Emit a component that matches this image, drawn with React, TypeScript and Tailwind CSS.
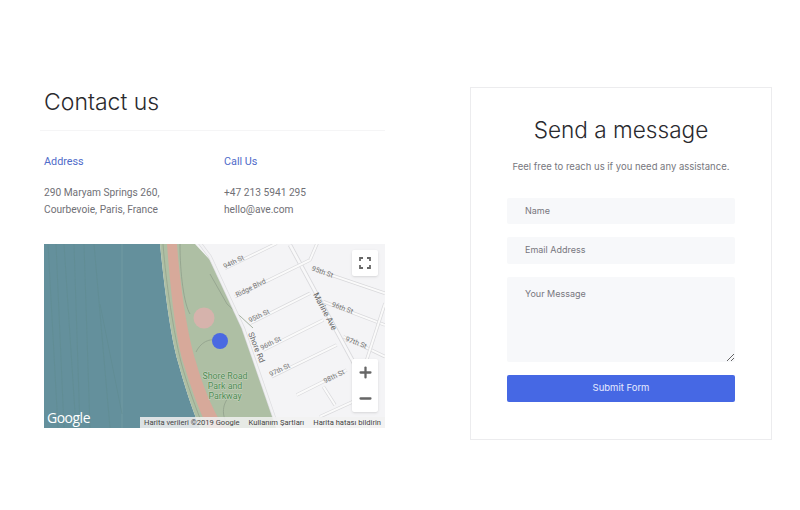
import { Minus, Plus } from 'lucide-react';

const streets = [
  'M45 85 L200 10',
  'M75 170 L300 60',
  'M120 250 L300 160',
  'M160 330 L340 240',
  'M185 410 L380 315',
  'M260 465 L410 390',
  'M305 85 L525 160',
  'M340 185 L525 255',
  'M400 290 L525 350',
  'M300 60 L330 -10',
  'M340 440 L375 495',
  'M330 530 L440 480',
  'M525 190 L470 360',
];

const labels = [
  { text: '94th St', x: 74, y: 72, r: -26 },
  { text: 'Ridge Blvd', x: 125, y: 150, r: -26 },
  { text: '95th St', x: 150, y: 234, r: -26 },
  { text: '96th St', x: 185, y: 316, r: -26 },
  { text: '97th St', x: 212, y: 396, r: -26 },
  { text: '98th St', x: 375, y: 416, r: -26 },
  { text: '95th St', x: 335, y: 102, r: 20 },
  { text: '96th St', x: 395, y: 210, r: 20 },
  { text: '97th St', x: 436, y: 314, r: 20 },
];

const MapDrawing = () => (
  <svg viewBox="0 0 341 184" className="block w-full h-full">
    <rect width="341" height="184" fill="#f4f4f6" />
    {/* water */}
    <path d="M0 0 H116 C120 40 126 90 134 118 C140 140 148 165 156 184 H0 Z" fill="#64909c" />
    <g stroke="#5f8c90" strokeWidth="0.6" fill="none">
      <path d="M4 0 L14 184" />
      <path d="M12 0 L20 184" />
      <path d="M20 0 L32 184" />
      <path d="M30 0 L36 184" />
      <path d="M40 0 L46 184" />
      <path d="M50 0 L66 184" />
      <path d="M78 0 V184" stroke="#7ba2aa" />
      <path d="M56 60 L78 170" />
    </g>
    {/* park */}
    <path d="M116 0 H151 L166 16 L199 86 L229 174 L232 184 H156 C148 165 140 140 134 118 C126 90 120 40 116 0 Z" fill="#aebfa4" />
    <path d="M123 0 H133 C136 40 143 90 152 118 C158 140 168 165 180 184 H164 C154 165 146 140 139 118 C131 90 126 40 123 0 Z" fill="#d7a99a" />
    <path d="M119 0 C122 40 130 90 137 118 C143 140 152 165 160 184" stroke="#8f9f8a" strokeWidth="0.7" fill="none" />
    <path d="M136 0 C136 30 140 60 146 70 M152 108 C158 96 168 94 176 97 M186 184 C176 172 178 158 188 150 M166 30 L183 60 L209 84" stroke="#909f8c" strokeWidth="0.8" fill="none" />
    <circle cx="160" cy="74" r="10.5" fill="#d6b3ac" />
    <circle cx="176" cy="97" r="8" fill="#4a69e2" />
    {/* streets, drawn in 3x units from the top-left of the grid */}
    <g transform="translate(166 -4) scale(0.3333)">
      <path d="M-45 -10 L0 50 L100 265 L195 540" stroke="#dcdcdf" strokeWidth="11" fill="none" />
      <path d="M-45 -10 L0 50 L100 265 L195 540" stroke="#f2f2f4" strokeWidth="7" fill="none" />
      <path d="M240 15 L470 440" stroke="#d9d9dc" strokeWidth="13" fill="none" />
      <path d="M240 15 L470 440" stroke="#f8f8f9" strokeWidth="8" fill="none" />
      {streets.map((d) => (
        <g key={d} fill="none">
          <path d={d} stroke="#d8d8db" strokeWidth="10" />
          <path d={d} stroke="#fafafa" strokeWidth="6" />
        </g>
      ))}
      {labels.map((l) => (
        <text
          key={l.text + l.x}
          transform={`translate(${l.x} ${l.y}) rotate(${l.r})`}
          textAnchor="middle"
          fontFamily="Roboto, sans-serif"
          fontSize="21"
          fill="#757575"
        >
          {l.text}
        </text>
      ))}
      <text transform="translate(132 325) rotate(68)" textAnchor="middle" fontFamily="Roboto, sans-serif" fontSize="24" fill="#666">Shore Rd</text>
      <text transform="translate(338 218) rotate(62)" textAnchor="middle" fontFamily="Roboto, sans-serif" fontSize="25" fill="#666">Marine Ave</text>
    </g>
    <g fontFamily="Roboto, sans-serif" fontSize="8.8" fill="#4f8a52" textAnchor="middle" stroke="#c9d6c2" strokeWidth="1" paintOrder="stroke">
      <text x="181" y="134.5">Shore Road</text>
      <text x="181" y="144.5">Park and</text>
      <text x="181" y="154.5">Parkway</text>
    </g>
  </svg>
);

const App = () => {
  return (
    <div className="w-[800px] h-[510px] bg-white font-['Roboto',sans-serif] flex items-start pt-[87px] pl-[44px]">
      {/* Contact column */}
      <div className="w-[341px] shrink-0">
        <h2 className="font-['Inter',sans-serif] font-light text-[23px] leading-[30px] text-[#2a2a2e]">Contact us</h2>
        <div className="-ml-[4px] mt-[13px] h-px bg-[#f5f5f6]"></div>
        <div className="grid grid-cols-[180px_1fr] mt-[22px] text-[10.2px] leading-[17px] text-[#707076]">
          <div>
            <h4 className="text-[#4f6bc9] text-[10.8px]">Address</h4>
            <p className="mt-[14px]">290 Maryam Springs 260,<br />Courbevoie, Paris, France</p>
          </div>
          <div>
            <h4 className="text-[#4f6bc9] text-[10.8px]">Call Us</h4>
            <p className="mt-[14px]">+47 213 5941 295<br />hello@ave.com</p>
          </div>
        </div>

        {/* Map */}
        <div className="relative mt-[26px] h-[184px] overflow-hidden">
          <MapDrawing />
          <div className="absolute top-[6px] right-[7px] w-[26px] h-[26px] bg-white rounded-[2px] shadow-sm flex items-center justify-center">
            <svg width="12" height="12" viewBox="0 0 12 12" fill="none" stroke="#666" strokeWidth="1.8">
              <path d="M1 4 V1 H4 M8 1 H11 V4 M11 8 V11 H8 M4 11 H1 V8" />
            </svg>
          </div>
          <div className="absolute top-[115px] right-[7px] w-[26px] h-[53px] bg-white rounded-[2px] shadow-sm flex flex-col items-center justify-around text-[#666]">
            <Plus size={17} strokeWidth={3.2} />
            <Minus size={17} strokeWidth={3.2} />
          </div>
          <span className="absolute left-[3px] bottom-[1px] text-white text-[14px] font-medium font-['Open_Sans',sans-serif] leading-[18px] tracking-[-0.5px]">Google</span>
          <div className="absolute bottom-0 right-0 w-[245px] h-[11px] bg-[#f1f1f1]/85 flex items-center justify-between px-[4px] text-[7.6px] leading-none text-[#444] whitespace-nowrap">
            <span>Harita verileri ©2019 Google</span>
            <span>Kullanım Şartları</span>
            <span>Harita hatası bildirin</span>
          </div>
        </div>
      </div>

      {/* Message card */}
      <div className="ml-[85px] w-[302px] h-[353px] shrink-0 border border-[#ececee] px-[36px] pt-[27px]">
        <h2 className="font-['Inter',sans-serif] font-light text-[22.6px] leading-[30px] text-[#2a2a2e] text-center">Send a message</h2>
        <p className="mt-[14px] text-center text-[9.5px] leading-[16px] text-[#77777e] font-['Inter',sans-serif] whitespace-nowrap">Feel free to reach us if you need any assistance.</p>
        <form className="mt-[23px] flex flex-col gap-[13px] font-['Inter',sans-serif] text-[9px]">
          <input placeholder="Name" className="w-full h-[26px] bg-[#f7f8fa] rounded-[2px] pl-[18px] pb-[2px] outline-none placeholder:text-[#77777e]" />
          <input placeholder="Email Address" className="w-full h-[27px] bg-[#f7f8fa] rounded-[2px] pl-[18px] pb-[2px] outline-none placeholder:text-[#77777e]" />
          <textarea placeholder="Your Message" className="block w-full h-[85px] bg-[#f7f8fa] rounded-[2px] pl-[18px] pt-[10px] outline-none placeholder:text-[#77777e]"></textarea>
          <button type="button" className="w-full h-[27px] bg-[#4668e4] rounded-[2px] text-[#e6ebff] text-[9.5px]">Submit Form</button>
        </form>
      </div>
    </div>
  );
};

export default App;
